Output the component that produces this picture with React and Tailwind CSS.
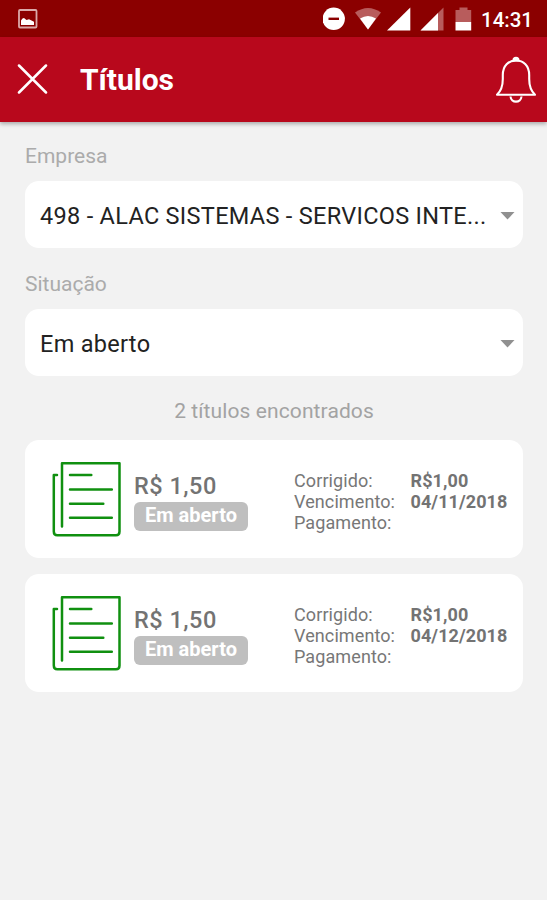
const company = '498 - ALAC SISTEMAS - SERVICOS INTE...'

const titles = [
  { id: 1, amount: 'R$ 1,50', status: 'Em aberto', corrected: 'R$1,00', dueDate: '04/11/2018', payment: '' },
  { id: 2, amount: 'R$ 1,50', status: 'Em aberto', corrected: 'R$1,00', dueDate: '04/12/2018', payment: '' },
]

function StatusBar() {
  return (
    <div className="h-[37px] bg-[#8b0000] flex items-center justify-between pl-[18px] pr-[13px]">
      <svg width="20" height="20" viewBox="0 0 20 20" fill="none">
        <rect x="1" y="1" width="17.5" height="17.5" rx="1" stroke="#dba9a9" strokeWidth="1.8" />
        <path d="M3 16V11.5L4.5 9.4L6 9L8.5 11L11 10.2L13 11.2L16 12.8V16Z" fill="#fff" />
      </svg>

      <div className="flex items-center">
        <svg width="158" height="37" viewBox="323 0 158 37">
          {/* Do not disturb */}
          <circle cx="333.7" cy="18.8" r="11.2" fill="#fff" />
          <rect x="328.5" y="17.6" width="10.5" height="2.4" fill="#8b0000" />

          {/* Wifi */}
          <path d="M368 29.5L355 12.5Q368 3.5 381 12.5Z" fill="#b85c5c" />
          <path d="M368 29.5L360 18.6Q368 13.5 376 18.6Z" fill="#fff" />

          {/* Mobile signal */}
          <path d="M387 30.5L410.3 7.5V30.5Z" fill="#fff" />
          <path d="M420.5 30.5L443.5 7.5V30.5Z" fill="#b85c5c" />
          <path d="M420.5 30.5L438 13V30.5Z" fill="#fff" />

          {/* Battery */}
          <path d="M455.5 10H459.5V7.5H467.5V10H471.2V22H455.5Z" fill="#b85c5c" />
          <path d="M455.5 22H471.2V30.5H455.5Z" fill="#fff" />
        </svg>
        <span className="w-[53px] pt-[3px] text-[20.5px] leading-none font-medium text-white whitespace-nowrap">14:31</span>
      </div>
    </div>
  )
}

function Header() {
  return (
    <header className="h-[85px] bg-[#b8081c] flex items-center pl-[17px] pr-[10px] shadow-[0_2px_4px_rgba(0,0,0,0.3)]">
      <button aria-label="Fechar" className="shrink-0">
        <svg width="31" height="31" viewBox="0 0 31 31" fill="none" stroke="#fff" strokeWidth="2.5" strokeLinecap="round">
          <path d="M2 1.5L29 28.5M29 1.5L2 28.5" />
        </svg>
      </button>
      <h1 className="flex-1 pl-8 text-[30px] leading-none font-bold text-white">Títulos</h1>
      <button aria-label="Notificações" className="shrink-0">
        <svg width="42" height="48" viewBox="0 0 42 48" fill="none" stroke="#fff" strokeWidth="2.1" strokeLinejoin="round">
          <path d="M2 38.7C6 35 7.8 30 7.8 23V19C7.8 9.5 13.5 4.5 21 4.5S34.2 9.5 34.2 19V23C34.2 30 36 35 40 38.7Z" />
          <path d="M18.5 4.4Q18.5 1.7 21 1.7T23.5 4.4Z" fill="#fff" />
          <path d="M15.5 40.5C16 47.3 26 47.3 26.5 40.5" />
        </svg>
      </button>
    </header>
  )
}

function SelectField({ label, value }) {
  return (
    <div>
      <p className="h-[23px] text-[21px] leading-[25px] text-[#ababab]">{label}</p>
      <button className="mt-[14px] w-full h-[67px] bg-white rounded-[14px] flex items-center justify-between pl-[15px] pr-2 text-left">
        <span className="pt-[5px] text-[23.5px] tracking-[0.3px] leading-none text-[#222] whitespace-nowrap">{value}</span>
        <svg width="15" height="10" viewBox="0 -2 15 10" className="shrink-0">
          <path d="M0.5 0H14.5L7.5 7.5Z" fill="#909090" />
        </svg>
      </button>
    </div>
  )
}

function DocumentIcon() {
  return (
    <svg width="71" height="78" viewBox="0 0 71 78" fill="none" stroke="#109010" strokeWidth="2.5" strokeLinecap="round" strokeLinejoin="round" className="shrink-0">
      <path d="M11 66.5V3.2H68.5V71.4Q68.5 75.2 65 75.2H6.3Q2.8 75.2 2.8 71.4V15H6" />
      <path d="M19 15H40.3M19 29.4H60.8M19 43.7H52.3M19 57.8H60.8" />
    </svg>
  )
}

function TitleCard({ title }) {
  return (
    <div className="h-[118px] bg-white rounded-[14px] flex items-center pl-[26px]">
      <DocumentIcon />

      <div className="w-[160px] pl-3 pt-1 shrink-0">
        <p className="text-[23.5px] leading-[28px] mb-0.5 font-medium text-[#737373] tracking-[0.5px]">{title.amount}</p>
        <span className="mt-px w-[114px] h-[29px] pb-[3px] flex items-center justify-center bg-[#bfbfbf] rounded-[6px] text-[20px] leading-none font-bold text-white">
          {title.status}
        </span>
      </div>

      <div className="grid grid-cols-[116.5px_auto] pl-3 pt-[5px] text-[18px] tracking-[0.1px] leading-[21.3px] text-[#777] whitespace-nowrap">
        <span>Corrigido:</span>
        <span className="font-bold text-[#737373]">{title.corrected}</span>
        <span>Vencimento:</span>
        <span className="font-bold text-[#737373]">{title.dueDate}</span>
        <span>Pagamento:</span>
        <span className="font-bold text-[#737373]">{title.payment}</span>
      </div>
    </div>
  )
}

export default function App() {
  return (
    <div className="w-full h-screen overflow-hidden bg-[#f2f2f2] font-['Roboto',sans-serif]">
      <StatusBar />
      <Header />

      <main className="px-6 pt-[22px] pl-[25px]">
        <div className="flex flex-col gap-6">
          <SelectField label="Empresa" value={company} />
          <SelectField label="Situação" value="Em aberto" />
        </div>

        <p className="mt-[23px] text-center text-[21px] tracking-[0.1px] leading-6 text-[#a3a3a3]">
          {titles.length} títulos encontrados
        </p>

        <div className="mt-[17px] flex flex-col gap-4">
          {titles.map(title => <TitleCard key={title.id} title={title} />)}
        </div>
      </main>
    </div>
  )
}
